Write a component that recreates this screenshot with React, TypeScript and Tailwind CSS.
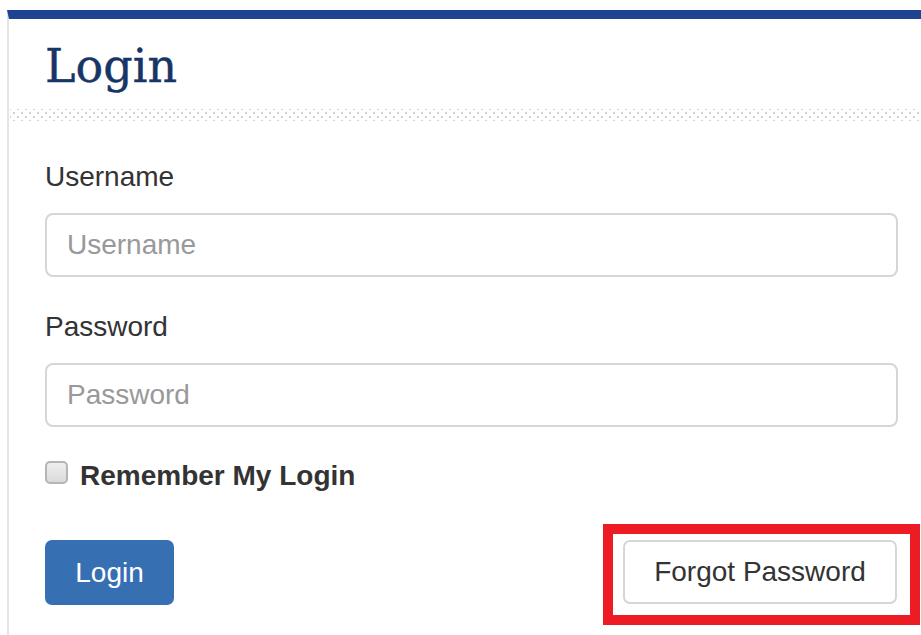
import { useState } from "react";

const sans = "font-['Liberation_Sans',Arial,sans-serif]";

const Field = ({ label, placeholder, type = "text" }: { label: string; placeholder: string; type?: string }) => (
  <div className="flex flex-col">
    <label className={`${sans} text-[28px] leading-[40px] text-[#333]`}>{label}</label>
    <input
      type={type}
      placeholder={placeholder}
      className={`${sans} mt-[16px] h-[64px] w-full rounded-[8px] border-2 border-[#d6d6d6] bg-white px-[20px] text-[28px] text-[#555] outline-none placeholder:text-[#999]`}
    />
  </div>
);

export default function App() {
  const [remember, setRemember] = useState(false);

  return (
    <div className="relative flex h-[635px] w-[921px] flex-col overflow-hidden bg-white pl-[7px] pt-[10px]">
      <div className="flex flex-1 flex-col border-l-2 border-t-[9px] border-l-[#e4e4e4] border-t-[#1e4491]">
        <h1 className="pl-[36px] pt-[19px] font-['DejaVu_Serif',serif] text-[46px] leading-[57px] text-[#173565] [-webkit-text-stroke:0.4px_#173565]">
          Login
        </h1>

        {/* dotted rule under the heading */}
        <div className="mt-[14px] ml-[1px] h-[12px] bg-[radial-gradient(circle,#d2d2d2_1px,transparent_1.6px),radial-gradient(circle,#d2d2d2_1px,transparent_1.6px)] bg-[length:8px_8px] bg-[position:0_0,4px_4px]" />

        <form className="flex flex-col pl-[36px] pr-[23px]" onSubmit={(e) => e.preventDefault()}>
          <div className="mt-[36px]">
            <Field label="Username" placeholder="Username" />
          </div>
          <div className="mt-[30px]">
            <Field label="Password" placeholder="Password" type="password" />
          </div>

          <label className="mt-[29px] flex cursor-pointer items-start">
            <span
              onClick={() => setRemember(!remember)}
              className="mt-[5px] flex h-[23px] w-[23px] items-center justify-center rounded-[5px] border-2 border-[#b5b5b5] bg-gradient-to-b from-[#efefef] to-[#dadada] text-[16px] text-[#333]"
            >
              {remember ? "✓" : ""}
            </span>
            <span className={`${sans} ml-[12px] text-[28px] font-bold leading-[40px] text-[#333]`}>
              Remember My Login
            </span>
          </label>

          <div className="mt-[44px] flex items-start justify-between">
            <button
              type="submit"
              className={`${sans} h-[65px] w-[129px] rounded-[7px] bg-[#3770b2] text-[28px] text-white`}
            >
              Login
            </button>
            <button
              type="button"
              className={`${sans} mr-[1px] h-[64px] w-[274px] rounded-[7px] border-2 border-[#d6d6d6] bg-white text-[28px] text-[#333]`}
            >
              Forgot Password
            </button>
          </div>
        </form>
      </div>

      {/* highlight box around the forgot-password button */}
      <div className="pointer-events-none absolute left-[603px] top-[524px] h-[101px] w-[317px] border-[10px] border-[#ed1c24]" />
    </div>
  );
}
